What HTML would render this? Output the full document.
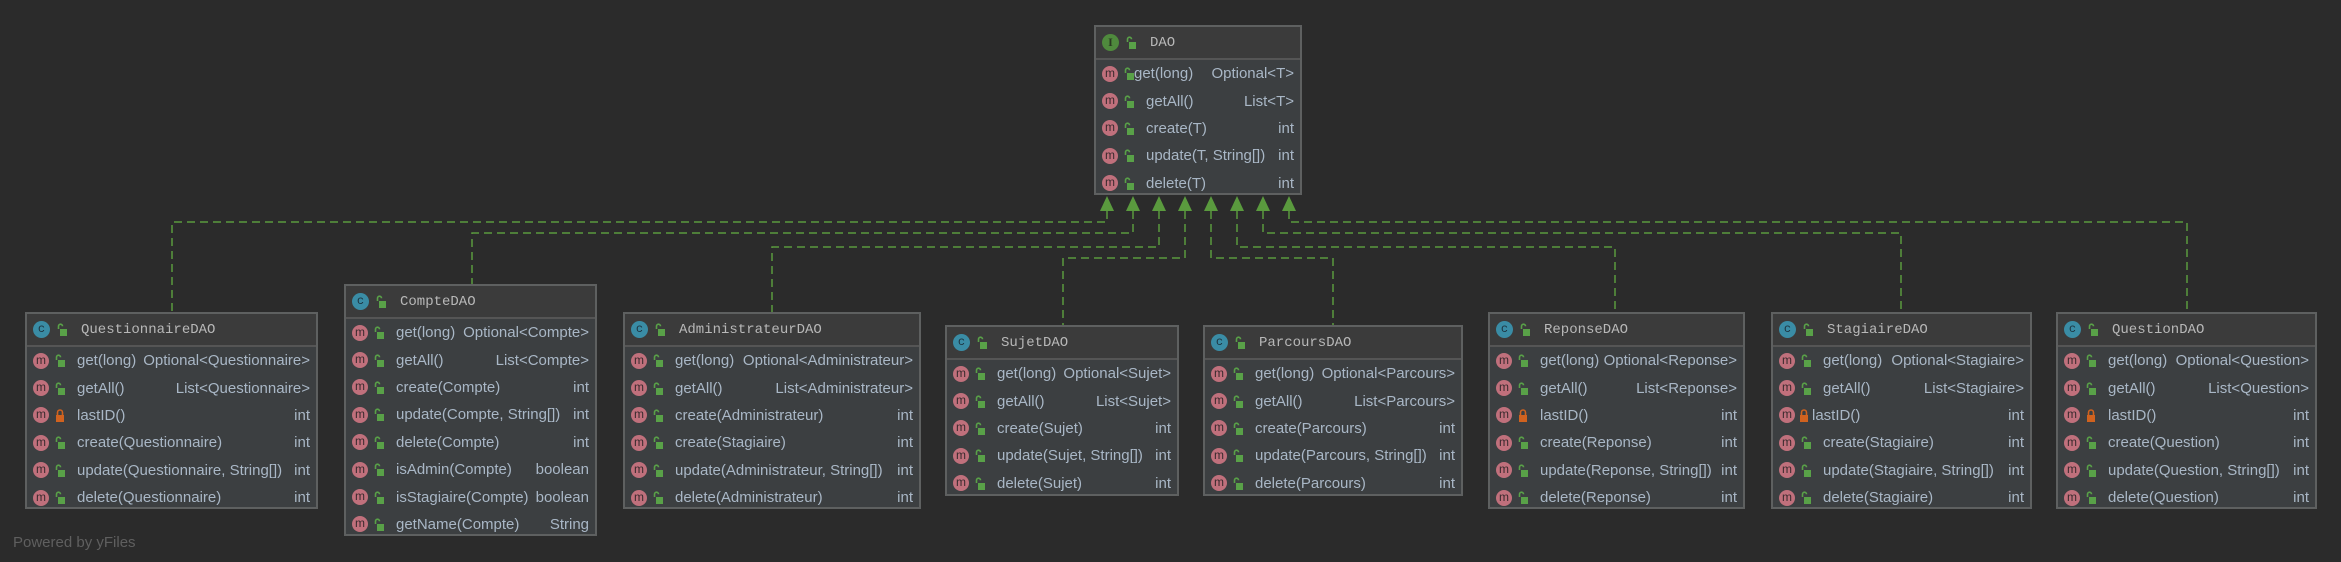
<!DOCTYPE html>
<html><head><meta charset="utf-8"><style>
*{margin:0;padding:0;box-sizing:border-box}
body{width:2341px;height:562px;background:#2b2b2b;position:relative;overflow:hidden;font-family:"Liberation Sans",sans-serif}
.box{position:absolute;background:#3c3f41;border:2px solid #5e6060}
.hd{height:33px;background:#3b3b3b;border-bottom:2px solid #555;display:flex;align-items:center;padding-left:6px;font-family:"Liberation Mono",monospace;font-size:14px;color:#b8b8b8}
.r{height:27.4px;display:flex;align-items:center;padding:0 6px 0 6px;font-size:15px;color:#a9b7c6;white-space:nowrap}
.m{width:16px;height:16px;border-radius:50%;background:#c0707c;color:#3a2a2e;font-size:12px;line-height:15px;text-align:center;flex:none}
.c{width:17px;height:17px;border-radius:50%;background:#3a8ca5;color:#1d3440;font-size:12px;line-height:17px;text-align:center;flex:none}
.i{width:17px;height:17px;border-radius:50%;background:#4f8a3d;color:#2a3a22;font-size:12px;line-height:17px;text-align:center;flex:none;font-family:"Liberation Serif",serif;font-weight:bold}
.l{width:10px;height:13px;margin:0 12px 0 6px;flex:none;background:no-repeat}
.n{flex:1}.t{text-align:right}
.hd .l{margin:0 14px 0 7px}
</style></head><body>
<svg width="0" height="0" style="position:absolute"><defs>
<symbol id="g" viewBox="0 0 10 13"><path d="M1.5 6V3.2a2 2 0 0 1 4 0" fill="none" stroke="#59a148" stroke-width="1.6"/><rect x="3" y="6" width="7" height="7" fill="#59a148"/></symbol>
<symbol id="o" viewBox="0 0 10 13"><path d="M2.5 6V3.5a2.5 2.5 0 0 1 5 0V6" fill="none" stroke="#d0621f" stroke-width="1.6"/><rect x="1" y="6" width="8" height="7" fill="#d0621f"/></symbol>
</defs></svg>
<svg width="2341" height="562" style="position:absolute;left:0;top:0">
<g fill="none" stroke="#5a9a3e" stroke-width="1.5" stroke-dasharray="8,5">
<path d="M1107 211V222H172V312"/>
<path d="M1133 211V233H472V284"/>
<path d="M1159 211V247H772V312"/>
<path d="M1185 211V258H1063V325"/>
<path d="M1211 211V258H1333V325"/>
<path d="M1237 211V247H1615V312"/>
<path d="M1263 211V233H1901V312"/>
<path d="M1289 211V222H2187V312"/>
</g>
<g fill="#5a9a3e">
<path d="M1107 196l-7 15h14z"/><path d="M1133 196l-7 15h14z"/><path d="M1159 196l-7 15h14z"/><path d="M1185 196l-7 15h14z"/>
<path d="M1211 196l-7 15h14z"/><path d="M1237 196l-7 15h14z"/><path d="M1263 196l-7 15h14z"/><path d="M1289 196l-7 15h14z"/>
</g>
</svg>

<div class="box" style="left:1094px;top:25px;width:208px;height:170px">
<div class="hd"><span class="i">I</span><svg class="l"><use href="#g"/></svg>DAO</div>
<div class="r"><span class="m">m</span><svg class="l" style="margin-right:0"><use href="#g"/></svg><span class="n">get(long)</span><span class="t">Optional&lt;T&gt;</span></div>
<div class="r"><span class="m">m</span><svg class="l"><use href="#g"/></svg><span class="n">getAll()</span><span class="t">List&lt;T&gt;</span></div>
<div class="r"><span class="m">m</span><svg class="l"><use href="#g"/></svg><span class="n">create(T)</span><span class="t">int</span></div>
<div class="r"><span class="m">m</span><svg class="l"><use href="#g"/></svg><span class="n">update(T, String[])</span><span class="t">int</span></div>
<div class="r"><span class="m">m</span><svg class="l"><use href="#g"/></svg><span class="n">delete(T)</span><span class="t">int</span></div>
</div>

<div class="box" style="left:25px;top:312px;width:293px;height:197px">
<div class="hd"><span class="c">c</span><svg class="l"><use href="#g"/></svg>QuestionnaireDAO</div>
<div class="r"><span class="m">m</span><svg class="l"><use href="#g"/></svg><span class="n">get(long)</span><span class="t">Optional&lt;Questionnaire&gt;</span></div>
<div class="r"><span class="m">m</span><svg class="l"><use href="#g"/></svg><span class="n">getAll()</span><span class="t">List&lt;Questionnaire&gt;</span></div>
<div class="r"><span class="m">m</span><svg class="l"><use href="#o"/></svg><span class="n">lastID()</span><span class="t">int</span></div>
<div class="r"><span class="m">m</span><svg class="l"><use href="#g"/></svg><span class="n">create(Questionnaire)</span><span class="t">int</span></div>
<div class="r"><span class="m">m</span><svg class="l"><use href="#g"/></svg><span class="n">update(Questionnaire, String[])</span><span class="t">int</span></div>
<div class="r"><span class="m">m</span><svg class="l"><use href="#g"/></svg><span class="n">delete(Questionnaire)</span><span class="t">int</span></div>
</div>

<div class="box" style="left:344px;top:284px;width:253px;height:252px">
<div class="hd"><span class="c">c</span><svg class="l"><use href="#g"/></svg>CompteDAO</div>
<div class="r"><span class="m">m</span><svg class="l"><use href="#g"/></svg><span class="n">get(long)</span><span class="t">Optional&lt;Compte&gt;</span></div>
<div class="r"><span class="m">m</span><svg class="l"><use href="#g"/></svg><span class="n">getAll()</span><span class="t">List&lt;Compte&gt;</span></div>
<div class="r"><span class="m">m</span><svg class="l"><use href="#g"/></svg><span class="n">create(Compte)</span><span class="t">int</span></div>
<div class="r"><span class="m">m</span><svg class="l"><use href="#g"/></svg><span class="n">update(Compte, String[])</span><span class="t">int</span></div>
<div class="r"><span class="m">m</span><svg class="l"><use href="#g"/></svg><span class="n">delete(Compte)</span><span class="t">int</span></div>
<div class="r"><span class="m">m</span><svg class="l"><use href="#g"/></svg><span class="n">isAdmin(Compte)</span><span class="t">boolean</span></div>
<div class="r"><span class="m">m</span><svg class="l"><use href="#g"/></svg><span class="n">isStagiaire(Compte)</span><span class="t">boolean</span></div>
<div class="r"><span class="m">m</span><svg class="l"><use href="#g"/></svg><span class="n">getName(Compte)</span><span class="t">String</span></div>
</div>

<div class="box" style="left:623px;top:312px;width:298px;height:197px">
<div class="hd"><span class="c">c</span><svg class="l"><use href="#g"/></svg>AdministrateurDAO</div>
<div class="r"><span class="m">m</span><svg class="l"><use href="#g"/></svg><span class="n">get(long)</span><span class="t">Optional&lt;Administrateur&gt;</span></div>
<div class="r"><span class="m">m</span><svg class="l"><use href="#g"/></svg><span class="n">getAll()</span><span class="t">List&lt;Administrateur&gt;</span></div>
<div class="r"><span class="m">m</span><svg class="l"><use href="#g"/></svg><span class="n">create(Administrateur)</span><span class="t">int</span></div>
<div class="r"><span class="m">m</span><svg class="l"><use href="#g"/></svg><span class="n">create(Stagiaire)</span><span class="t">int</span></div>
<div class="r"><span class="m">m</span><svg class="l"><use href="#g"/></svg><span class="n">update(Administrateur, String[])</span><span class="t">int</span></div>
<div class="r"><span class="m">m</span><svg class="l"><use href="#g"/></svg><span class="n">delete(Administrateur)</span><span class="t">int</span></div>
</div>

<div class="box" style="left:945px;top:325px;width:234px;height:171px">
<div class="hd"><span class="c">c</span><svg class="l"><use href="#g"/></svg>SujetDAO</div>
<div class="r"><span class="m">m</span><svg class="l"><use href="#g"/></svg><span class="n">get(long)</span><span class="t">Optional&lt;Sujet&gt;</span></div>
<div class="r"><span class="m">m</span><svg class="l"><use href="#g"/></svg><span class="n">getAll()</span><span class="t">List&lt;Sujet&gt;</span></div>
<div class="r"><span class="m">m</span><svg class="l"><use href="#g"/></svg><span class="n">create(Sujet)</span><span class="t">int</span></div>
<div class="r"><span class="m">m</span><svg class="l"><use href="#g"/></svg><span class="n">update(Sujet, String[])</span><span class="t">int</span></div>
<div class="r"><span class="m">m</span><svg class="l"><use href="#g"/></svg><span class="n">delete(Sujet)</span><span class="t">int</span></div>
</div>

<div class="box" style="left:1203px;top:325px;width:260px;height:171px">
<div class="hd"><span class="c">c</span><svg class="l"><use href="#g"/></svg>ParcoursDAO</div>
<div class="r"><span class="m">m</span><svg class="l"><use href="#g"/></svg><span class="n">get(long)</span><span class="t">Optional&lt;Parcours&gt;</span></div>
<div class="r"><span class="m">m</span><svg class="l"><use href="#g"/></svg><span class="n">getAll()</span><span class="t">List&lt;Parcours&gt;</span></div>
<div class="r"><span class="m">m</span><svg class="l"><use href="#g"/></svg><span class="n">create(Parcours)</span><span class="t">int</span></div>
<div class="r"><span class="m">m</span><svg class="l"><use href="#g"/></svg><span class="n">update(Parcours, String[])</span><span class="t">int</span></div>
<div class="r"><span class="m">m</span><svg class="l"><use href="#g"/></svg><span class="n">delete(Parcours)</span><span class="t">int</span></div>
</div>

<div class="box" style="left:1488px;top:312px;width:257px;height:197px">
<div class="hd"><span class="c">c</span><svg class="l"><use href="#g"/></svg>ReponseDAO</div>
<div class="r"><span class="m">m</span><svg class="l"><use href="#g"/></svg><span class="n">get(long)</span><span class="t">Optional&lt;Reponse&gt;</span></div>
<div class="r"><span class="m">m</span><svg class="l"><use href="#g"/></svg><span class="n">getAll()</span><span class="t">List&lt;Reponse&gt;</span></div>
<div class="r"><span class="m">m</span><svg class="l"><use href="#o"/></svg><span class="n">lastID()</span><span class="t">int</span></div>
<div class="r"><span class="m">m</span><svg class="l"><use href="#g"/></svg><span class="n">create(Reponse)</span><span class="t">int</span></div>
<div class="r"><span class="m">m</span><svg class="l"><use href="#g"/></svg><span class="n">update(Reponse, String[])</span><span class="t">int</span></div>
<div class="r"><span class="m">m</span><svg class="l"><use href="#g"/></svg><span class="n">delete(Reponse)</span><span class="t">int</span></div>
</div>

<div class="box" style="left:1771px;top:312px;width:261px;height:197px">
<div class="hd"><span class="c">c</span><svg class="l"><use href="#g"/></svg>StagiaireDAO</div>
<div class="r"><span class="m">m</span><svg class="l"><use href="#g"/></svg><span class="n">get(long)</span><span class="t">Optional&lt;Stagiaire&gt;</span></div>
<div class="r"><span class="m">m</span><svg class="l"><use href="#g"/></svg><span class="n">getAll()</span><span class="t">List&lt;Stagiaire&gt;</span></div>
<div class="r"><span class="m">m</span><svg class="l" style="margin:0 3px 0 4px"><use href="#o"/></svg><span class="n">lastID()</span><span class="t">int</span></div>
<div class="r"><span class="m">m</span><svg class="l"><use href="#g"/></svg><span class="n">create(Stagiaire)</span><span class="t">int</span></div>
<div class="r"><span class="m">m</span><svg class="l"><use href="#g"/></svg><span class="n">update(Stagiaire, String[])</span><span class="t">int</span></div>
<div class="r"><span class="m">m</span><svg class="l"><use href="#g"/></svg><span class="n">delete(Stagiaire)</span><span class="t">int</span></div>
</div>

<div class="box" style="left:2056px;top:312px;width:261px;height:197px">
<div class="hd"><span class="c">c</span><svg class="l"><use href="#g"/></svg>QuestionDAO</div>
<div class="r"><span class="m">m</span><svg class="l"><use href="#g"/></svg><span class="n">get(long)</span><span class="t">Optional&lt;Question&gt;</span></div>
<div class="r"><span class="m">m</span><svg class="l"><use href="#g"/></svg><span class="n">getAll()</span><span class="t">List&lt;Question&gt;</span></div>
<div class="r"><span class="m">m</span><svg class="l"><use href="#o"/></svg><span class="n">lastID()</span><span class="t">int</span></div>
<div class="r"><span class="m">m</span><svg class="l"><use href="#g"/></svg><span class="n">create(Question)</span><span class="t">int</span></div>
<div class="r"><span class="m">m</span><svg class="l"><use href="#g"/></svg><span class="n">update(Question, String[])</span><span class="t">int</span></div>
<div class="r"><span class="m">m</span><svg class="l"><use href="#g"/></svg><span class="n">delete(Question)</span><span class="t">int</span></div>
</div>

<div style="position:absolute;left:13px;top:534px;font-size:15px;color:#5f5f5f">Powered by yFiles</div>
</body></html>
